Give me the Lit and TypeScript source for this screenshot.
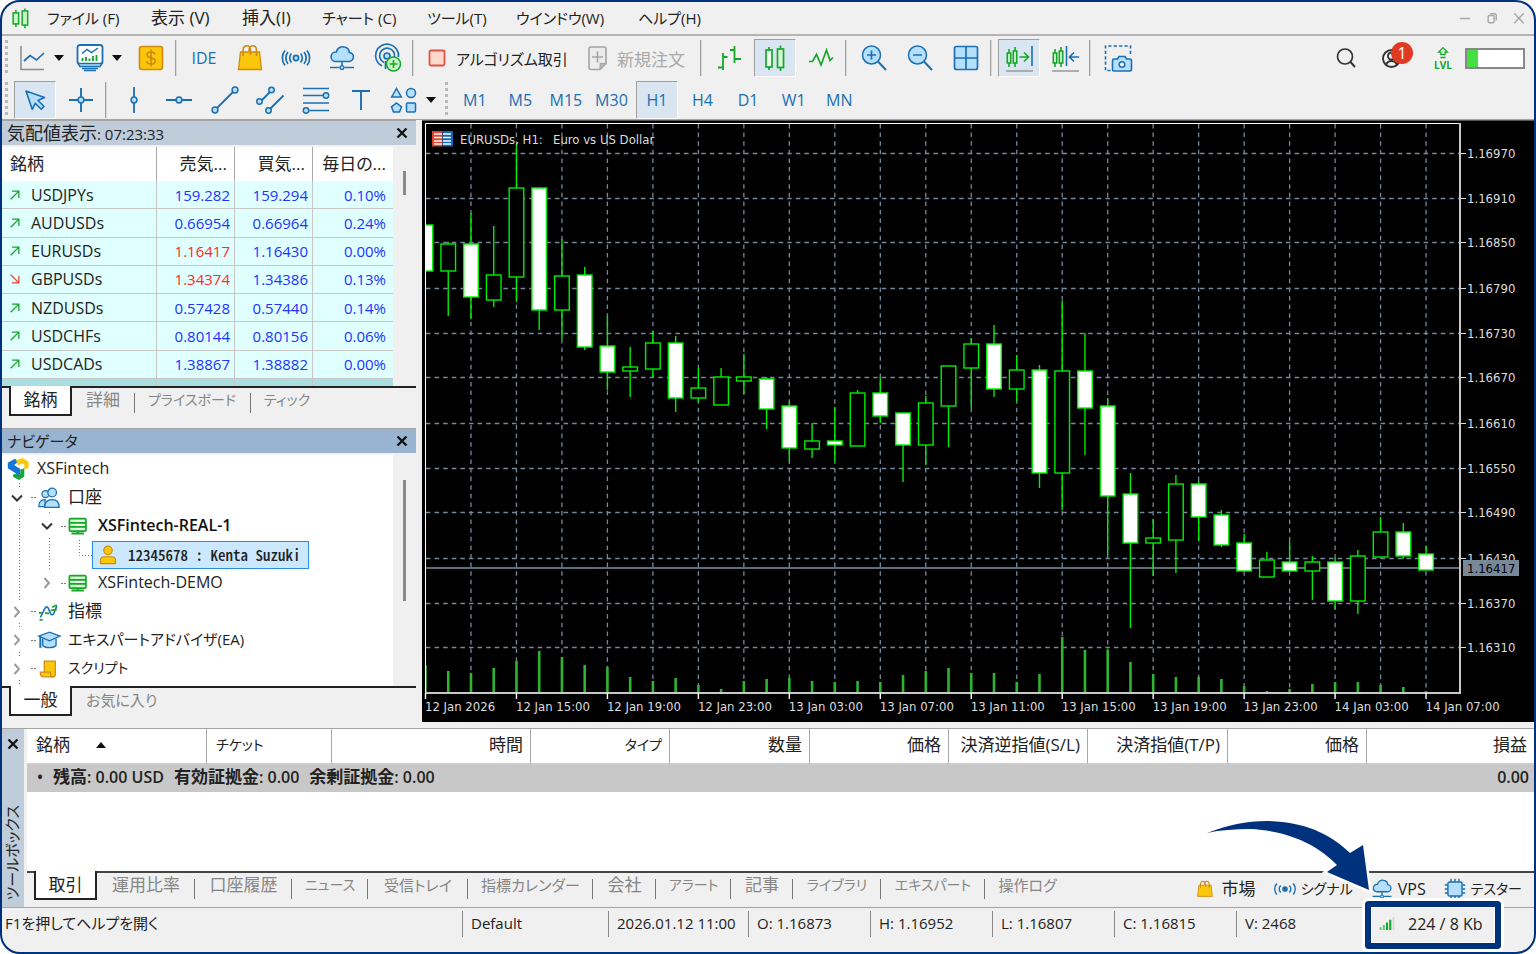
import { LitElement, html, css, svg, nothing } from "lit";
import { customElement, property, state } from "lit/decorators.js";
import { classMap } from "lit/directives/class-map.js";

/* ---------- icons ---------- */

const BLUE = "#1b6fb3";
const SKY = "#b4e0fd";
const GREEN = "#16a62a";
const GOLD = "#fbc70a";
const AMBER = "#cf8a12";

const cloud = svg`<path d="M7 17.500h13.500a4.500 4.500 0 0 0 .8-9 6 6 0 0 0-5-5.500 6.500 6.500 0 0 0-8 5 4.800 4.800 0 0 0-1.300 9.500z" fill=${SKY} stroke=${BLUE} stroke-width="1.600"/><path d="M14 17.500v4M2 23.500h9.500M16.500 23.500H26" stroke=${BLUE} stroke-width="1.600"/><circle cx="14" cy="23.500" r="1.900" fill=${SKY} stroke=${BLUE} stroke-width="1.300"/>`;
const bag = svg`<path d="M4.500 8h19l2 17.500h-23z" fill=${GOLD} stroke=${AMBER} stroke-width="1.300"/><path d="M7 12V6.500C7 3 9 1.800 10.800 1.800S14.500 3 14.500 6.500V11M13 7c0-3.500 1.500-5.200 3.600-5.200S20.500 3 20.500 6.500V12" fill="none" stroke=${AMBER} stroke-width="1.600"/>`;
const signal = svg`<g fill="none" stroke=${BLUE} stroke-width="1.700"><circle cx="14" cy="14" r="2.600" fill=${SKY}/><path d="M9.500 9.500a6.500 6.500 0 0 0 0 9M18.500 9.500a6.500 6.500 0 0 1 0 9M6 8a9.500 9.500 0 0 0 0 12M22 8a9.500 9.500 0 0 1 0 12M3 6.500a12 12 0 0 0 0 15M25 6.500a12 12 0 0 1 0 15"/></g>`;
const smallSignal = svg`<g fill="none" stroke=${BLUE} stroke-width="2"><circle cx="14" cy="14" r="2.600" fill=${BLUE}/><path d="M8.500 9.500a6.500 6.500 0 0 0 0 9M19.500 9.500a6.500 6.500 0 0 1 0 9M3.500 7a11.500 11.500 0 0 0 0 14M24.500 7a11.500 11.500 0 0 1 0 14"/></g>`;
const miniCandles = svg`<g fill="#d6f8d6" stroke=${GREEN} stroke-width="1.600"><path d="M4 5v4M4 19v4M10 3v4M10 19v4"/><rect x="2.300" y="9" width="3.400" height="10"/><rect x="8.300" y="7" width="3.400" height="12"/></g>`;

const ICONS: Record<string, unknown> = {
  logo: svg`<g fill="#c9f7c9" stroke=${GREEN} stroke-width="1.900"><path d="M7.500 3.500v4M7.500 21.500v4M19 2v3M19 23v4"/><rect x="4" y="7.500" width="7" height="14"/><rect x="15.500" y="5" width="7" height="18"/></g>`,
  line: svg`<path d="M3 2v23.500h23" fill="none" stroke="#8c8c8c" stroke-width="1.500"/><path d="M6 17l6-5.500 6.500 4.500L26 9" fill="none" stroke=${BLUE} stroke-width="1.700"/>`,
  monitor: svg`<rect x="1.500" y="1" width="25" height="19" rx="2.500" fill="#fff" stroke=${BLUE} stroke-width="1.800"/><path d="M2 19.500h24l-2 3H4z" fill=${SKY} stroke=${BLUE} stroke-width="1.400"/><path d="M6 24.500h16M8 26.500h12" stroke=${BLUE} stroke-width="1.600"/><path d="M6 9.500l5-4 4.500 3L22 4" fill="none" stroke=${BLUE} stroke-width="1.500"/><path d="M6.500 17v-3M10 17v-4M13.500 17v-2.500M17 17v-5M20.500 17v-6" stroke=${GREEN} stroke-width="1.900"/>`,
  dollar: svg`<rect x="2.500" y="2.500" width="23" height="23" rx="2.500" fill=${GOLD} stroke=${AMBER} stroke-width="1.600"/><path d="M18 10.500c-.5-1.800-2-2.500-4-2.500-2.300 0-4 1-4 2.900 0 4 8.200 2 8.200 6 0 2-1.800 3.100-4.200 3.100s-4-1-4.400-2.900M14 5.500v17" fill="none" stroke=${AMBER} stroke-width="1.600"/>`,
  bag,
  signal,
  smallSignal,
  cloud,
  podcast: svg`<g fill="none" stroke=${BLUE} stroke-width="1.700"><circle cx="13" cy="12" r="3" fill=${SKY}/><path d="M10 18.500a7.500 7.500 0 1 1 10.400-5M8 22A11.500 11.500 0 1 1 24.500 13"/><path d="M11.500 17v8"/></g><circle cx="19.500" cy="20" r="7" fill="#c9f7c9" stroke=${GREEN} stroke-width="1.600"/><path d="M19.500 16v8M15.500 20h8" stroke=${GREEN} stroke-width="1.700"/>`,
  stop: svg`<rect x="6.500" y="6.500" width="15" height="15" rx="1.500" fill="#fdd9cc" stroke="#dd5345" stroke-width="1.800"/>`,
  order: svg`<path d="M7 3h13a2 2 0 0 1 2 2v14.500l-6 6H7a2 2 0 0 1-2-2V5a2 2 0 0 1 2-2z" fill="#ececec" stroke="#a4a4a4" stroke-width="1.600"/><path d="M22 19.500h-6v6z" fill="#b9b9b9" stroke="#a4a4a4"/><path d="M13.500 7.500v11M8 13h11" stroke="#a4a4a4" stroke-width="1.600"/>`,
  bars: svg`<path d="M8 9v17M3 23.500h5M8 13h4.500M19.500 2v17M15 6h4.500M19.500 15H26" fill="none" stroke=${GREEN} stroke-width="1.800"/>`,
  candles: svg`<g fill="#d6f8d6" stroke=${GREEN} stroke-width="1.700"><path d="M8 3v3M8 23v3M19.500 1.500V5M19.500 24v3"/><rect x="5" y="6" width="6" height="17" fill="#eefcee"/><rect x="16.500" y="5" width="6" height="18.500"/></g>`,
  zig: svg`<path d="M2 17.500h3.500l4-7 4.500 10.500 5.500-15 3.500 10.500 3-3" fill="none" stroke=${GREEN} stroke-width="1.700"/>`,
  zoomin: svg`<circle cx="11.500" cy="11" r="9" fill=${SKY} stroke=${BLUE} stroke-width="1.500"/><path d="M18 17.500l8 8.500" stroke=${BLUE} stroke-width="2"/><path d="M11.500 6.500v9M7 11h9" stroke=${BLUE} stroke-width="1.700"/>`,
  zoomout: svg`<circle cx="11.500" cy="11" r="9" fill=${SKY} stroke=${BLUE} stroke-width="1.500"/><path d="M18 17.500l8 8.500" stroke=${BLUE} stroke-width="2"/><path d="M7 11h9" stroke=${BLUE} stroke-width="1.700"/>`,
  tiles: svg`<rect x="2.500" y="2.500" width="23" height="23" rx="2" fill=${SKY} stroke=${BLUE} stroke-width="1.700"/><path d="M14 3v22M3 14h22" stroke=${BLUE} stroke-width="1.700"/>`,
  scroll: svg`${miniCandles}<path d="M14.500 13H23M19 8.500l4.500 4.500-4.500 4.500" fill="none" stroke=${GREEN} stroke-width="1.700"/><path d="M27 2v20" stroke=${BLUE} stroke-width="1.600"/><path d="M1 27h27" stroke="#999" stroke-width="1.400"/>`,
  shift: svg`${miniCandles}<path d="M28 13h-9M23 8.500L18.500 13l4.500 4.500" fill="none" stroke=${BLUE} stroke-width="1.700"/><path d="M15.500 2v20" stroke=${BLUE} stroke-width="1.600"/><path d="M1 27h27" stroke="#999" stroke-width="1.400"/>`,
  camera: svg`<path d="M26.500 10V2H1.500v24.500H7" fill="none" stroke=${BLUE} stroke-width="1.600" stroke-dasharray="3.200 2.200"/><path d="M10 15h3.500l1.500-2.500h6l1.500 2.500H26a1.500 1.500 0 0 1 1.500 1.500v9a1.500 1.500 0 0 1-1.500 1.500H10a1.500 1.500 0 0 1-1.500-1.500v-9A1.500 1.500 0 0 1 10 15z" fill=${SKY} stroke=${BLUE} stroke-width="1.600"/><circle cx="18" cy="20.500" r="2.800" fill="#fff" stroke=${BLUE} stroke-width="1.600"/>`,
  search: svg`<circle cx="13" cy="12.500" r="7.500" fill="none" stroke="#333" stroke-width="1.700"/><path d="M18.500 18l4.500 5" stroke="#333" stroke-width="1.900"/>`,
  user: svg`<circle cx="13.500" cy="14.500" r="8.500" fill="none" stroke="#333" stroke-width="1.900"/><circle cx="13.500" cy="12" r="3.500" fill="none" stroke="#333" stroke-width="1.900"/><path d="M8 21c1-3 3-4 5.500-4s4.500 1 5.500 4" fill="none" stroke="#333" stroke-width="1.900"/>`,
  level: svg`<path d="M14 1.500l10.500 10.500h-5.500v6H9v-6H3.500z" fill="#c9f7c9" stroke=${GREEN} stroke-width="2.800"/><path d="M8 24.500h12" stroke=${GREEN} stroke-width="3"/>`,
  cursor: svg`<path d="M5 5l18.500 6.500-6.500 3 6 6-2.800 2.800-6-6-3 6z" fill=${SKY} stroke=${BLUE} stroke-width="1.600" stroke-linejoin="round"/>`,
  cross: svg`<path d="M14 2v9M14 17v9M2 14h9M17 14h9" stroke=${BLUE} stroke-width="1.900"/><circle cx="14" cy="14" r="2.900" fill=${SKY} stroke=${BLUE} stroke-width="1.500"/>`,
  vline: svg`<path d="M14 1v10M14 17v10" stroke=${BLUE} stroke-width="1.800"/><circle cx="14" cy="14" r="2.900" fill=${SKY} stroke=${BLUE} stroke-width="1.500"/>`,
  hline: svg`<path d="M1 14h10M17 14h10" stroke=${BLUE} stroke-width="1.800"/><circle cx="14" cy="14" r="2.900" fill=${SKY} stroke=${BLUE} stroke-width="1.500"/>`,
  trend: svg`<path d="M6 22L22 6" stroke=${BLUE} stroke-width="1.800"/><circle cx="4" cy="24" r="2.900" fill=${SKY} stroke=${BLUE} stroke-width="1.500"/><circle cx="24" cy="4" r="2.900" fill=${SKY} stroke=${BLUE} stroke-width="1.500"/>`,
  channel: svg`<path d="M4.500 15.500l11-11M13 24L27.500 9.500" stroke=${BLUE} stroke-width="1.800"/><g fill=${SKY} stroke=${BLUE} stroke-width="1.500"><circle cx="3.500" cy="15.500" r="2.700"/><circle cx="15.500" cy="4" r="2.700"/><circle cx="12.500" cy="24.500" r="2.700"/></g>`,
  fibo: svg`<path d="M1 2.500h26M1 9.500h21M1 17h26M6 24.500h21" stroke=${BLUE} stroke-width="1.700"/><circle cx="24" cy="9.500" r="2.700" fill=${SKY} stroke=${BLUE} stroke-width="1.500"/><circle cx="4" cy="24.500" r="2.700" fill=${SKY} stroke=${BLUE} stroke-width="1.500"/>`,
  text: svg`<path d="M5 5h18M14 5v19" stroke=${BLUE} stroke-width="1.900"/>`,
  shapes: svg`<g fill=${SKY} stroke=${BLUE} stroke-width="1.500"><path d="M6.500 2.500l4.800 8.500H1.700z"/><circle cx="21" cy="7" r="4.500"/><path d="M6.500 17l5 3.800-2 5.200h-6l-2-5.200z"/><rect x="16.500" y="17" width="9" height="9" rx="1"/></g>`,
  chip: svg`<path d="M9 1v26M14 1v26M19 1v26M1 9h26M1 14h26M1 19h26" stroke=${BLUE} stroke-width="1.800"/><rect x="5" y="5" width="18" height="18" rx="2" fill=${SKY} stroke=${BLUE} stroke-width="1.800"/>`,
  close: svg`<path d="M7 7l14 14M21 7L7 21" stroke="#111" stroke-width="3.600"/>`,
  brand: svg`<path d="M10 1L1 6v7l8 5 3 2-4 1v3l2 1 7-5v-6l-8-5 6-4.500z" fill="#1474d8"/><path d="M11.500 3L20 0l7.500 5v7L22 15V8l-3-1-5 2.500z" fill="#fbc70a"/><path d="M17 15l5-2v11l-7 4-7-4 1-4 5 1.500 3-1.500z" fill="#18a63a"/>`,
  people: svg`<g fill=${SKY} stroke=${BLUE} stroke-width="1.600"><circle cx="9.500" cy="9" r="4.500"/><path d="M1 25c0-6 2.500-9 8-9v9z"/><circle cx="18" cy="7" r="5.500"/><path d="M8.500 26c0-7 3.500-10 9.500-10s9 3 9 10z"/></g>`,
  server: svg`<g transform="translate(0 2) scale(.88)"><rect x="2" y="3" width="24" height="18" rx="1.500" fill="#c6f5c6" stroke=${GREEN} stroke-width="2.400"/><path d="M2 9h24M2 15h24" stroke=${GREEN} stroke-width="2.600"/><path d="M5 6h2M10 6h13M5 12h2M10 12h13M5 18h2M10 18h13" stroke="#fff" stroke-width="1.600"/><path d="M14 21v3M5 24.500h18" stroke=${GREEN} stroke-width="3"/></g>`,
  account: svg`<circle cx="14" cy="7.500" r="6" fill=${GOLD} stroke=${AMBER} stroke-width="1.600"/><path d="M3.500 26v-4.500c0-3.500 2.500-5 5.500-5h10c3 0 5.500 1.500 5.500 5V26z" fill=${GOLD} stroke=${AMBER} stroke-width="1.600"/>`,
  indicator: svg`<path d="M3 21l6-12c1-2 3-2 4 0l3 7c1 2 3 2 4 0l4-10" fill="none" stroke=${BLUE} stroke-width="2"/><path d="M1 15h4M9 15l5 1M16 12l8-1M18 8l6-3M2 24h4" stroke=${GREEN} stroke-width="2.200"/>`,
  hat: svg`<path d="M6 12v9c3 3.500 14 3.500 17 0v-9" fill=${SKY} stroke=${BLUE} stroke-width="1.700"/><path d="M1 9l13.500-5L28 9l-13.500 6z" fill=${SKY} stroke=${BLUE} stroke-width="1.700"/><path d="M3 10v14" stroke=${BLUE} stroke-width="2.600"/>`,
  script: svg`<path d="M8 4h14v17a3 3 0 0 1-3 3H7a4 4 0 0 1-4-4v-2h5z" fill=${GOLD} stroke=${AMBER} stroke-width="1.600"/><path d="M8 18h8v3.500c0 2 2 2.500 3 2.500" fill="none" stroke=${AMBER} stroke-width="1.600"/>`,
  open: svg`<path d="M4 9l10 10L24 9" fill="none" stroke="#333" stroke-width="4"/>`,
  closed: svg`<path d="M9 4l9 10-9 10" fill="none" stroke="#999" stroke-width="3.800"/>`,
  up: svg`<path d="M4 24L23 5M7 5h16v16" fill="none" stroke=${GREEN} stroke-width="3"/>`,
  down: svg`<path d="M4 4l19 19M23 7v16H7" fill="none" stroke="#e04338" stroke-width="3"/>`,
  minimize: svg`<path d="M2 15h24" stroke="#a9a9a9" stroke-width="3.600"/>`,
  restore: svg`<rect x="5" y="8" width="14" height="17" rx="3" fill="none" stroke="#a9a9a9" stroke-width="3.400"/><path d="M10 4h9a5 5 0 0 1 5 5v10" fill="none" stroke="#a9a9a9" stroke-width="3.400"/>`,
  dismiss: svg`<path d="M3 3l22 23M25 3L3 26" stroke="#a9a9a9" stroke-width="3.400"/>`,
  net: svg`<path d="M3 26v-5M9 26v-9" stroke="#5fd068" stroke-width="4"/><path d="M15 26V12" stroke=${GREEN} stroke-width="4"/><path d="M21 26V7" stroke=${GREEN} stroke-width="4"/><path d="M27 26V2" stroke="#d4d4d4" stroke-width="3"/>`,
};

const icon = (name: string, size: "xs" | "sm" | "md" | "lg" = "lg") =>
  html`<svg class="icon ${size}" viewBox="0 0 28 28" aria-hidden="true">${ICONS[name]}</svg>`;

/* Katakana is set smaller than kanji, mixed labels in between. */
const scriptClass = (text: string) => {
  const kana = /[\u3040-\u30ff]/.test(text);
  const kanji = /[\u4e00-\u9fff]/.test(text);
  return kana && kanji ? "mixed" : kana ? "kana" : kanji ? "kanji" : "latin";
};

const shared = css`
  * {
    box-sizing: border-box;
  }
  button {
    font: inherit;
    color: inherit;
    background: none;
    border: 0;
    padding: 0;
    margin: 0;
    white-space: nowrap;
  }
  .icon {
    display: block;
    flex: none;
    overflow: visible;
  }
  .xs { width: 12px; height: 12px; }
  .sm { width: 18px; height: 18px; }
  .md { width: 22px; height: 22px; }
  .lg { width: 28px; height: 28px; }
  .kanji { font-size: 17px; }
  .latin { font-size: 16px; }
  .mixed { font-size: 15px; }
  .kana { font-size: 14px; }
`;

/* ---------- toolbars ---------- */

@customElement("tool-bars")
export class ToolBars extends LitElement {
  @state() private frame = "H1";

  static styles = [
    shared,
    css`
      :host {
        display: block;
        border-bottom: 1px solid #a5a5a5;
      }
      .bar {
        display: flex;
        align-items: center;
        height: 44px;
      }
      .drawing {
        height: 39px;
      }
      .grip {
        flex: none;
        width: 3px;
        height: 36px;
        margin: 0 4px 0 3px;
        background: repeating-linear-gradient(#b9b9b9 0 3px, transparent 3px 6px);
      }
      .sep {
        flex: none;
        width: 2px;
        height: 36px;
        margin: 0 4px 0 1px;
        border-left: 1px solid #a0a0a0;
        border-right: 1px solid #dadada;
      }
      .tool {
        display: flex;
        align-items: center;
        justify-content: center;
        flex: none;
        width: 46px;
        height: 38px;
        color: #1b6fb3;
        font-size: 16px;
      }
      .grid .tool {
        width: auto;
      }
      .drop {
        width: 58px;
        gap: 8px;
      }
      .drop::after {
        content: "";
        border: 5px solid transparent;
        border-top: 6px solid #111;
        border-bottom: 0;
      }
      .pressed {
        margin: 0 2px;
        width: 42px;
        background: #d9e5f1;
        border: 1px solid #fff;
        border-top-color: #a0a0a0;
        border-left-color: #a0a0a0;
      }
      .grid .pressed {
        width: auto;
      }
      .wide {
        width: 153px;
        justify-content: flex-start;
        gap: 5px;
        padding-left: 5px;
        color: #222;
        font-size: 15px;
      }
      .order {
        width: 128px;
        padding-left: 13px;
        color: #a9a9a9;
        font-size: 17px;
      }
      .grid {
        display: grid;
        grid-auto-flow: column;
        grid-auto-columns: 1fr;
        flex: none;
      }
      .objects {
        width: 273px;
      }
      .frames {
        width: 410px;
      }
      .account {
        display: flex;
        align-items: center;
        margin-left: auto;
        padding-right: 9px;
      }
      .profile {
        position: relative;
      }
      .badge {
        position: absolute;
        top: 3px;
        right: 2px;
        width: 22px;
        height: 22px;
        border-radius: 50%;
        background: #e03a22;
        color: #fff;
        font-size: 16px;
        line-height: 22px;
        text-align: center;
      }
      .level {
        display: flex;
        flex-direction: column;
        align-items: center;
        gap: 1px;
        width: 44px;
        margin: 0 0 0 6px;
        color: #16a62a;
        font-size: 10px;
        font-weight: 700;
        line-height: 10px;
      }
      .level .icon {
        width: 14px;
        height: 12px;
      }
      .meter {
        width: 60px;
        height: 21px;
        border: 2px solid #888;
        background: #fff;
      }
      .meter span {
        display: block;
        width: 20%;
        height: 100%;
        background: #43df43;
      }
    `,
  ];

  private tool(name: string, label: string, extra = "") {
    return html`<button class="tool ${extra}" aria-label=${label}>${icon(name)}</button>`;
  }

  render() {
    const frames = ["M1", "M5", "M15", "M30", "H1", "H4", "D1", "W1", "MN"];
    return html`
      <div class="bar" role="toolbar">
        <span class="grip"></span>
        ${this.tool("line", "チャート", "drop")} ${this.tool("monitor", "表示", "drop")}
        ${this.tool("dollar", "銘柄")}
        <span class="sep"></span>
        <button class="tool">IDE</button>
        ${this.tool("bag", "市場")} ${this.tool("signal", "シグナル")} ${this.tool("cloud", "VPS")}
        ${this.tool("podcast", "配信")}
        <span class="sep"></span>
        <button class="tool wide">${icon("stop")}<span>アルゴリズム取引</span></button>
        <button class="tool wide order">${icon("order")}<span>新規注文</span></button>
        <span class="sep"></span>
        ${this.tool("bars", "バー")} ${this.tool("candles", "ローソク足", "pressed")}
        ${this.tool("zig", "ライン")}
        <span class="sep"></span>
        ${this.tool("zoomin", "拡大")} ${this.tool("zoomout", "縮小")} ${this.tool("tiles", "整列")}
        <span class="sep"></span>
        ${this.tool("scroll", "自動スクロール", "pressed")} ${this.tool("shift", "シフト")}
        <span class="sep"></span>
        ${this.tool("camera", "画像保存")}
        <div class="account">
          ${this.tool("search", "検索")}
          <button class="tool profile" aria-label="通知">${icon("user")}<span class="badge">1</span></button>
          <div class="level">${icon("level")}<span>LVL</span></div>
          <div class="meter"><span></span></div>
        </div>
      </div>
      <div class="bar drawing" role="toolbar">
        <span class="grip"></span>
        ${this.tool("cursor", "カーソル", "pressed")} ${this.tool("cross", "十字線")}
        <span class="sep"></span>
        <div class="grid objects">
          ${this.tool("vline", "垂直線")} ${this.tool("hline", "水平線")}
          ${this.tool("trend", "トレンドライン")} ${this.tool("channel", "チャネル")}
          ${this.tool("fibo", "フィボナッチ")} ${this.tool("text", "テキスト")}
        </div>
        ${this.tool("shapes", "図形", "drop")}
        <span class="grip"></span>
        <div class="grid frames">
          ${frames.map(
            (f) => html`<button
              class=${classMap({ tool: true, pressed: f === this.frame })}
              @click=${() => (this.frame = f)}
            >${f}</button>`
          )}
        </div>
      </div>
    `;
  }
}

/* ---------- side panels ---------- */

const panelStyles = css`
  :host {
    display: flex;
    flex-direction: column;
    min-height: 0;
  }
  .title {
    display: flex;
    align-items: center;
    justify-content: space-between;
    flex: none;
    height: 25px;
    padding: 0 5px;
    border-top: 1px solid #a5a5a5;
    background: #bfccda;
    color: #222;
    font-size: 15px;
    line-height: 22px;
  }
  .title .jp {
    font-size: 18px;
  }
  .body {
    display: flex;
    min-height: 0;
    border-bottom: 2px solid #222;
  }
  .scroll {
    width: 23px;
    padding: 0 10px;
  }
  .thumb {
    display: block;
    width: 3px;
    background: #8a8a8a;
  }
  .tabs {
    display: flex;
    flex: none;
    align-items: flex-start;
    color: #868686;
    line-height: 22px;
    padding-left: 7px;
  }
  .tab {
    height: 28px;
    padding: 0 14px 4px;
  }
  .tab + .tab + .tab {
    background: linear-gradient(#777, #777) 0 5px / 1px 20px no-repeat;
  }
  .active {
    width: 63px;
    margin-top: -2px;
    height: 30px;
    padding: 0;
    background: #fff;
    border: 2px solid #222;
    border-top: 0;
    color: #222;
  }
`;

interface Quote {
  symbol: string;
  bid: string;
  ask: string;
  change: string;
  falling?: boolean;
  red?: boolean;
}

const QUOTES: Quote[] = [
  { symbol: "USDJPYs", bid: "159.282", ask: "159.294", change: "0.10%" },
  { symbol: "AUDUSDs", bid: "0.66954", ask: "0.66964", change: "0.24%" },
  { symbol: "EURUSDs", bid: "1.16417", ask: "1.16430", change: "0.00%", red: true },
  { symbol: "GBPUSDs", bid: "1.34374", ask: "1.34386", change: "0.13%", red: true, falling: true },
  { symbol: "NZDUSDs", bid: "0.57428", ask: "0.57440", change: "0.14%" },
  { symbol: "USDCHFs", bid: "0.80144", ask: "0.80156", change: "0.06%" },
  { symbol: "USDCADs", bid: "1.38867", ask: "1.38882", change: "0.00%" },
];

@customElement("market-watch")
export class MarketWatch extends LitElement {
  static styles = [
    shared,
    panelStyles,
    css`
      .body {
        height: 241px;
        margin-top: 2px;
      }
      table {
        flex: 1;
        height: 239px;
        table-layout: fixed;
        border-collapse: separate;
        border-spacing: 0;
        font-size: 15px;
        line-height: 20px;
      }
      th {
        height: 34px;
        padding: 0 7px;
        background: #fff;
        border-right: 1px solid #a8a8a8;
        color: #222;
        font-size: 17px;
        font-weight: 400;
        text-align: right;
        white-space: nowrap;
      }
      th:first-child {
        width: 155px;
        padding-left: 8px;
        text-align: left;
      }
      th:last-child {
        width: 80px;
      }
      td {
        height: 28px;
        padding: 0 4px;
        background: #e0ffff;
        border-right: 1px solid #c6c6c6;
        border-bottom: 1px solid #c6c6c6;
        color: #2233ff;
        text-align: right;
      }
      td:last-child,
      th:last-child {
        border-right: 0;
        padding-right: 7px;
      }
      .symbol {
        padding-left: 7px;
        color: #222;
        font-size: 16px;
        text-align: left;
      }
      .symbol div {
        display: flex;
        align-items: center;
        gap: 10px;
      }
      .red {
        color: #ff2a2a;
      }
      .next td {
        height: 7px;
        padding: 0;
        background: #aadfe2;
        border-bottom: 0;
        line-height: 0;
      }
      .thumb {
        height: 24px;
        margin-top: 24px;
      }
    `,
  ];

  render() {
    const tabs = ["銘柄", "詳細", "プライスボード", "ティック"];
    return html`
      <div class="title">
        <span><span class="jp">気配値表示</span>: 07:23:33</span>
        <button aria-label="閉じる">${icon("close", "sm")}</button>
      </div>
      <div class="body">
        <table>
          <thead>
            <tr><th>銘柄</th><th>売気...</th><th>買気...</th><th>毎日の...</th></tr>
          </thead>
          <tbody>
            ${QUOTES.map(
              (q) => html`<tr>
                <td class="symbol"><div>${icon(q.falling ? "down" : "up", "xs")}${q.symbol}</div></td>
                <td class=${classMap({ red: !!q.red })}>${q.bid}</td>
                <td>${q.ask}</td>
                <td>${q.change}</td>
              </tr>`
            )}
            <tr class="next"><td></td><td></td><td></td><td></td></tr>
          </tbody>
        </table>
        <div class="scroll"><span class="thumb"></span></div>
      </div>
      <div class="tabs">
        ${tabs.map((t, i) => html`<button class="tab ${scriptClass(t)} ${i === 0 ? "active" : ""}">${t}</button>`)}
      </div>
    `;
  }
}

interface Node {
  level: number;
  label: string;
  icon: string;
  mark?: "open" | "closed";
  kind?: "bold" | "selected";
}

const NODES: Node[] = [
  { level: 0, label: "XSFintech", icon: "brand" },
  { level: 1, label: "口座", icon: "people", mark: "open" },
  { level: 2, label: "XSFintech-REAL-1", icon: "server", mark: "open", kind: "bold" },
  { level: 3, label: "12345678 : Kenta Suzuki", icon: "account", kind: "selected" },
  { level: 2, label: "XSFintech-DEMO", icon: "server", mark: "closed" },
  { level: 1, label: "指標", icon: "indicator", mark: "closed" },
  { level: 1, label: "エキスパートアドバイザ(EA)", icon: "hat", mark: "closed" },
  { level: 1, label: "スクリプト", icon: "script", mark: "closed" },
];

@customElement("nav-tree")
export class NavTree extends LitElement {
  static styles = [
    shared,
    panelStyles,
    css`
      .title {
        background: #99b4d1;
      }
      .body {
        height: 233px;
        margin-top: 2px;
      }
      .tree {
        position: relative;
        display: grid;
        grid-template-rows: repeat(8, 1fr);
        flex: 1;
        padding-bottom: 3px;
        background: #fff;
        color: #222;
        line-height: 24px;
      }
      .guides {
        position: absolute;
        inset: 0;
        width: 100%;
        height: 100%;
      }
      .row {
        position: relative;
        display: flex;
        align-items: center;
      }
      .l0 { padding-left: 5px; }
      .l1 { padding-left: 8px; }
      .l2 { padding-left: 38px; }
      .l3 { padding-left: 90px; }
      .label {
        padding: 0 0 2px 8px;
      }
      .mark {
        width: 14px;
        height: 14px;
      }
      .dots {
        width: 12px;
        height: 1px;
        margin: 0 1px;
        background: linear-gradient(90deg, transparent 6px, #777 6px 8px, transparent 8px 9px, #777 9px 11px, transparent 11px);
      }
      .bold {
        font-weight: 600;
        color: #111;
      }
      .selected {
        display: flex;
        align-items: center;
        width: 217px;
        height: 28px;
        padding-left: 5px;
        background: #cce8ff;
        border: 1px solid #2a8be0;
        color: #222;
        font-family: "Noto Sans CJK JP", sans-serif;
        font-feature-settings: "hwid";
        font-size: 15px;
        font-weight: 500;
        line-height: 20px;
      }
      .selected .icon {
        width: 20px;
        height: 20px;
      }
      .selected .label {
        padding: 0 0 0 10px;
      }
      .thumb {
        height: 121px;
        margin-top: 25px;
      }
    `,
  ];

  private label(n: Node) {
    const size = n.label.includes("(EA)") ? "mixed" : scriptClass(n.label);
    return html`<span class="label ${size} ${n.kind ?? ""}">${n.label}</span>`;
  }

  render() {
    return html`
      <div class="title">
        <span>ナビゲータ</span>
        <button aria-label="閉じる">${icon("close", "sm")}</button>
      </div>
      <div class="body">
        <div class="tree" role="tree">
          <svg class="guides" aria-hidden="true">
            <g fill="none" stroke="#777" stroke-dasharray="1 2">
              <path d="M17.500 28v5M17.500 54v91M17.500 168v6M17.500 197v6M17.500 225v6M47.500 57v3M47.500 83v32M77.500 85v15.500H90" />
            </g>
          </svg>
          ${NODES.map(
            (n) => html`<div class="row l${n.level}" role="treeitem">
              ${n.mark
                ? html`<svg class="icon mark" viewBox="0 0 28 28">${ICONS[n.mark]}</svg><span class="dots"></span>`
                : nothing}
              ${n.kind === "selected"
                ? html`<button class="selected">${icon(n.icon, "md")}<span class="label">${n.label}</span></button>`
                : html`${icon(n.icon, "md")}${this.label(n)}`}
            </div>`
          )}
        </div>
        <div class="scroll"><span class="thumb"></span></div>
      </div>
      <div class="tabs">
        <button class="tab active kanji">一般</button>
        <button class="tab mixed">お気に入り</button>
      </div>
    `;
  }
}

/* ---------- price chart ---------- */

// body top, body bottom, wick high, wick low, falling flag, volume bar top
const BARS: number[][] = [
  [225, 271, 225, 271, 1, 665], [244, 271, 242, 316, 0, 671], [244, 297, 213, 319, 1, 673],
  [275, 300, 226, 307, 0, 668], [188, 277, 145, 302, 0, 661], [188, 310, 188, 330, 1, 651],
  [276, 310, 239, 339, 0, 657], [275, 347, 267, 350, 1, 665], [346, 372, 316, 390, 1, 667],
  [367, 371, 347, 397, 0, 677], [343, 369, 331, 377, 0, 681], [343, 398, 336, 412, 1, 678],
  [388, 398, 368, 402, 0, 685], [377, 405, 368, 405, 0, 689], [377, 381, 354, 394, 0, 681],
  [379, 409, 377, 429, 1, 679], [406, 448, 401, 462, 1, 678], [441, 449, 423, 458, 0, 681],
  [441, 445, 407, 461, 1, 682], [393, 446, 390, 446, 0, 681], [393, 416, 377, 423, 1, 682],
  [413, 445, 413, 482, 1, 675], [403, 445, 396, 465, 0, 671], [366, 406, 366, 447, 0, 668],
  [344, 368, 338, 408, 0, 673], [344, 389, 325, 397, 1, 673], [370, 389, 355, 401, 0, 682],
  [370, 473, 365, 488, 1, 674], [371, 473, 301, 510, 0, 637], [371, 408, 333, 455, 1, 650],
  [406, 496, 398, 555, 1, 650], [494, 543, 473, 628, 1, 662], [538, 543, 519, 576, 0, 674],
  [484, 540, 475, 573, 0, 677], [484, 517, 481, 541, 1, 677], [515, 545, 510, 547, 1, 679],
  [543, 571, 534, 571, 1, 686], [560, 577, 552, 577, 0, 691], [562, 571, 541, 571, 1, 689],
  [562, 571, 556, 600, 0, 684], [562, 601, 558, 609, 1, 682], [556, 601, 550, 614, 0, 682],
  [532, 557, 517, 557, 0, 685], [532, 556, 523, 559, 1, 687], [554, 570, 546, 570, 1, 691],
];
const PRICE_ROWS = [153, 198, 242, 288, 333, 377, 423, 468, 512, 558, 603, 647];
const TIMES = [
  "12 Jan 2026", "12 Jan 15:00", "12 Jan 19:00", "12 Jan 23:00", "13 Jan 03:00", "13 Jan 07:00",
  "13 Jan 11:00", "13 Jan 15:00", "13 Jan 19:00", "13 Jan 23:00", "14 Jan 03:00", "14 Jan 07:00",
];
const barX = (i: number) => 425.5 + i * 22.74;

@customElement("price-chart")
export class PriceChart extends LitElement {
  static styles = css`
    :host {
      display: block;
      background: #000;
      border-top: 1px solid #555;
      overflow: hidden;
    }
    .plot {
      display: block;
      width: 100%;
      height: 100%;
    }
    .grid {
      fill: none;
      stroke: #778899;
      stroke-width: 1.3;
      stroke-dasharray: 4.5 4.1;
    }
    .axis {
      fill: #dcdcdc;
      font-family: "DejaVu Sans Condensed", "Open Sans", sans-serif;
      font-size: 13px;
    }
    .now {
      fill: #000;
    }
    .up {
      fill: #000;
      stroke: #00ee00;
      stroke-width: 1.4;
    }
    .down {
      fill: #fff;
      stroke: #00ee00;
      stroke-width: 1.4;
    }
    .volume {
      stroke: #2fb42f;
      stroke-width: 2.6;
    }
  `;

  render() {
    return html`<svg class="plot" viewBox="422 121 1112 601" preserveAspectRatio="xMinYMin meet" role="img" aria-label="EURUSDs H1">
      <defs><clipPath id="area"><rect x="425" y="123" width="1036" height="571" /></clipPath></defs>
      <g class="grid">
        ${PRICE_ROWS.map((y) => svg`<path d="M426 ${y + 0.5}H1460"/>`)}
        ${Array.from({ length: 22 }, (_, k) => svg`<path d="M${barX(2 + 2 * k)} 124V692"/>`)}
      </g>
      <path d="M426 568H1460" stroke="#5f6d7b" stroke-width="2" />
      <g clip-path="url(#area)">
        ${BARS.map(([, , , , , v], i) => svg`<path class="volume" d="M${barX(i)} ${v}V692"/>`)}
        ${BARS.map(
          ([top, bottom, high, low, falling], i) => svg`<g class=${falling ? "down" : "up"}>
            <path d="M${barX(i)} ${high}V${low}"/>
            <rect x=${barX(i) - 7.3} y=${top} width="14.600" height=${bottom - top}/>
          </g>`
        )}
      </g>
      <path d="M425.500 693V123.500H1460" fill="none" stroke="#fff" />
      <path d="M425 693H1460V123" fill="none" stroke="#c8c8c8" stroke-width="2" />
      <g class="axis">
        ${PRICE_ROWS.map(
          (y, k) => svg`<path d="M1461 ${y + 0.5}h5" stroke="#dcdcdc"/><text x="1467" y=${y + 5}>${(1.1697 - k * 0.0006).toFixed(5)}</text>`
        )}
        ${TIMES.map(
          (t, k) => svg`<path d="M${barX(4 * k)} 693v6" stroke="#fff" stroke-width="1.400"/><text x=${barX(4 * k) - 0.5} y="711">${t}</text>`
        )}
        <rect x="1463" y="560" width="56" height="16" fill="#778899" />
        <text class="now" x="1467" y="573">1.16417</text>
        <text x="460" y="144">EURUSDs, H1:</text>
        <text x="553" y="144">Euro vs US Dollar</text>
      </g>
      <rect x="432" y="131" width="10.500" height="15.500" fill="#e0442e" />
      <rect x="442.500" y="131" width="10.500" height="15.500" fill="#1268b8" />
      <path d="M434 134h8M434 137.500h8M434 141h8M434 144h8M443 134h8M443 137.500h8M443 141h8M443 144h8" stroke="#fff" stroke-width="1.500" />
    </svg>`;
  }
}

/* ---------- toolbox ---------- */

@customElement("tool-box")
export class ToolBox extends LitElement {
  static styles = [
    shared,
    css`
      :host {
        display: flex;
        border-top: 1px solid #a5a5a5;
        border-bottom: 1px solid #a5a5a5;
      }
      .spine {
        display: flex;
        flex-direction: column;
        align-items: center;
        justify-content: space-between;
        flex: none;
        width: 22px;
        margin-right: 3px;
        padding: 6px 0 7px;
        background: #bfccda;
        color: #222;
        font-size: 15px;
        line-height: 20px;
      }
      .side {
        writing-mode: vertical-rl;
        text-orientation: sideways;
        transform: rotate(180deg);
        padding-left: 2px;
      }
      .main {
        display: flex;
        flex-direction: column;
        flex: 1;
        min-width: 0;
      }
      .sheet {
        flex: 1;
        background: #fff;
        border-bottom: 2px solid #444;
      }
      table {
        width: 100%;
        table-layout: fixed;
        border-collapse: separate;
        border-spacing: 0;
        color: #222;
        line-height: 22px;
      }
      th {
        height: 35px;
        padding: 0 7px 3px;
        border-right: 1px solid #a8a8a8;
        border-bottom: 1px solid #d0d0d0;
        font-weight: 400;
        text-align: right;
        white-space: nowrap;
      }
      th:last-child {
        border-right: 0;
      }
      th.kanji.mixed {
        font-size: 17px;
      }
      .w180 { width: 180px; }
      .w125 { width: 125px; }
      .w199 { width: 199px; }
      .w139 { width: 139px; }
      .w140 { width: 140px; }
      .start {
        padding-left: 9px;
        text-align: left;
      }
      .sort {
        display: inline-block;
        margin: 0 0 3px 26px;
        border: 5px solid transparent;
        border-bottom: 6px solid #111;
        border-top: 0;
      }
      td {
        height: 28px;
        padding: 0 5px 3px 10px;
        background: #c8c8c8;
        font-size: 16px;
        font-weight: 600;
        text-align: right;
      }
      .sum {
        display: flex;
        align-items: center;
        gap: 10px;
        white-space: pre;
      }
      .sum .jp {
        font-size: 17px;
        font-weight: 700;
      }
      .tabs {
        display: grid;
        grid-template-columns: 63px 98px 97px 76px 100px 125px 63px 75px 62px 88px 104px 85px 1fr;
        height: 34px;
        padding: 0 12px 0 7px;
        color: #868686;
        line-height: 22px;
      }
      .tab {
        height: 27px;
        padding-bottom: 4px;
        background: linear-gradient(#777, #777) 100% 6px / 1px 20px no-repeat;
      }
      .tab.last {
        background: none;
      }
      .tab.active {
        height: 29px;
        margin-top: -2px;
        padding-bottom: 0;
        background: #fff;
        border: 2px solid #222;
        border-top: 0;
        color: #222;
      }
      .links {
        display: flex;
        justify-content: flex-end;
        align-items: center;
        gap: 18px;
        padding-bottom: 3px;
        color: #222;
      }
      .link {
        display: flex;
        align-items: center;
        gap: 5px;
        color: inherit;
        text-decoration: none;
        white-space: nowrap;
      }
      .link.kanji {
        gap: 8px;
      }
    `,
  ];

  render() {
    const heads: [string, string][] = [
      ["銘柄", "w180 start"], ["チケット", "w125 start"], ["時間", "w199"], ["タイプ", "w139"],
      ["数量", "w140"], ["価格", "w139"], ["決済逆指値(S/L)", "w139"], ["決済指値(T/P)", "w140"],
      ["価格", "w139"], ["損益", ""],
    ];
    const tabs = ["取引", "運用比率", "口座履歴", "ニュース", "受信トレイ", "指標カレンダー", "会社", "アラート", "記事", "ライブラリ", "エキスパート", "操作ログ"];
    return html`
      <div class="spine">
        <button aria-label="閉じる">${icon("close", "sm")}</button>
        <span class="side">ツールボックス</span>
      </div>
      <div class="main">
        <div class="sheet">
          <table>
            <thead>
              <tr>
                ${heads.map(
                  ([h, c], i) => html`<th class="${c} ${scriptClass(h)}">${h}${i === 0 ? html`<span class="sort"></span>` : nothing}</th>`
                )}
              </tr>
            </thead>
            <tbody>
              <tr>
                <td colspan="9">
                  <div class="sum">
                    <span>•</span>
                    <span><span class="jp">残高</span>: 0.00 USD</span>
                    <span><span class="jp">有効証拠金</span>: 0.00</span>
                    <span><span class="jp">余剰証拠金</span>: 0.00</span>
                  </div>
                </td>
                <td>0.00</td>
              </tr>
            </tbody>
          </table>
        </div>
        <div class="tabs">
          ${tabs.map(
            (t, i) => html`<button class="tab ${scriptClass(t)} ${i === 0 ? "active" : i === tabs.length - 1 ? "last" : ""}">${t}</button>`
          )}
          <div class="links">
            <a class="link kanji" href="#market">${icon("bag", "sm")}市場</a>
            <a class="link kana" href="#signals">${icon("smallSignal", "md")}シグナル</a>
            <a class="link latin" href="#vps">${icon("cloud", "md")}VPS</a>
            <a class="link kana" href="#tester">${icon("chip", "md")}テスター</a>
          </div>
        </div>
      </div>
    `;
  }
}

/* ---------- shell ---------- */

@customElement("app-root")
export class AppRoot extends LitElement {
  @property() status = "F1を押してヘルプを開く";

  static styles = [
    shared,
    css`
      :host {
        position: relative;
        display: flex;
        flex-direction: column;
        min-height: 100vh;
        box-sizing: border-box;
        overflow: hidden;
        border: 2px solid #00317c;
        border-radius: 20px;
        background: #f0f0f0;
        font-family: "Open Sans", "Noto Sans CJK JP", sans-serif;
        font-feature-settings: "palt";
        font-size: 15px;
      }
      .menu {
        display: flex;
        align-items: center;
        flex: none;
        height: 34px;
        padding: 0 9px 0 8px;
        border-bottom: 2px solid #b4b4b4;
        color: #222;
      }
      .items {
        display: grid;
        grid-template-columns: 104px 91px 80px 105px 89px 122px auto;
        align-items: baseline;
        margin-left: 15px;
        line-height: 24px;
      }
      .items button {
        text-align: left;
      }
      .items .kana {
        font-size: 15px;
      }
      .window {
        display: flex;
        gap: 15px;
        margin-left: auto;
      }
      .work {
        display: grid;
        grid-template-columns: 414px minmax(0, 1fr);
        column-gap: 6px;
        flex: 1;
        padding-bottom: 6px;
      }
      .side {
        display: grid;
        grid-template-rows: 308px 1fr;
      }
      tool-box {
        flex: none;
        height: 180px;
      }
      .status {
        display: grid;
        grid-template-columns: 460px 146px 140px 122px 122px 122px 122px 1fr auto;
        flex: none;
        height: 44px;
        color: #222;
        font-size: 15px;
      }
      .cell {
        height: 26px;
        margin-top: 3px;
        padding-left: 8px;
        border-left: 1px solid #8a8a8a;
        white-space: nowrap;
        line-height: 24px;
      }
      .hint {
        padding-left: 3px;
        border: 0;
      }
      .traffic {
        display: flex;
        align-items: center;
        gap: 14px;
        height: 48px;
        width: 136px;
        margin: -7px 33px 0 0;
        padding: 0 8px 3px;
        border: 6px solid #00317c;
        border-radius: 3px;
        outline: 3px solid #fff;
        box-shadow: inset 0 0 0 1px #fff;
        font-size: 16px;
        white-space: nowrap;
        z-index: 1;
      }
      .traffic .icon {
        width: 15px;
        height: 15px;
      }
      .arrow {
        position: absolute;
        right: 163px;
        bottom: 60px;
        width: 164px;
        height: 72px;
        overflow: visible;
        z-index: 2;
        pointer-events: none;
      }
    `,
  ];

  render() {
    const menu = ["ファイル (F)", "表示 (V)", "挿入(I)", "チャート (C)", "ツール(T)", "ウインドウ(W)", "ヘルプ(H)"];
    const cells = ["Default", "2026.01.12 11:00", "O: 1.16873", "H: 1.16952", "L: 1.16807", "C: 1.16815", "V: 2468"];
    return html`
      <header class="menu">
        ${icon("logo", "md")}
        <nav class="items">${menu.map((m) => html`<button class=${scriptClass(m)}>${m}</button>`)}</nav>
        <div class="window">
          <button aria-label="最小化">${icon("minimize", "xs")}</button>
          <button aria-label="元に戻す">${icon("restore", "xs")}</button>
          <button aria-label="閉じる">${icon("dismiss", "xs")}</button>
        </div>
      </header>
      <tool-bars></tool-bars>
      <main class="work">
        <div class="side">
          <market-watch></market-watch>
          <nav-tree></nav-tree>
        </div>
        <price-chart></price-chart>
      </main>
      <tool-box></tool-box>
      <footer class="status">
        <span class="cell hint">${this.status}</span>
        ${cells.map((c) => html`<span class="cell">${c}</span>`)}
        <span class="traffic">${icon("net")}<span>224 / 8 Kb</span></span>
      </footer>
      <svg class="arrow" viewBox="1207 821 164 72" aria-hidden="true">
        <path
          d="M1207 834C1228 826 1246 822 1267 822C1302 823 1328 833 1350 854L1363 846L1369 891L1327 873L1337 866C1320 848 1292 832 1250 830C1235 830 1220 831 1207 834Z"
          fill="#00317c" stroke="#fff" stroke-width="5" paint-order="stroke" />
      </svg>
    `;
  }
}
